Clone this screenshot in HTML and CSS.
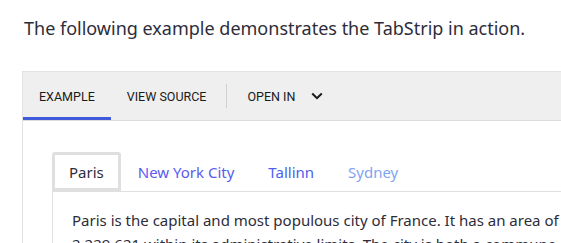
FILE: index.html
```html
<!DOCTYPE html>
<html lang="en">
<head>
  <meta charset="UTF-8" />
  <meta name="viewport" content="width=device-width, initial-scale=1.0" />
  <title>TabStrip</title>
  <link rel="stylesheet" href="styles.css">
</head>
<body>
  <p class="intro">The following example demonstrates the TabStrip in action.</p>

  <div class="demo">
    <div class="toolbar">
      <button class="tool active">EXAMPLE</button>
      <button class="tool">VIEW SOURCE</button>
      <span class="divider"></span>
      <button class="tool open-in">OPEN IN
        <svg width="12" height="8" viewBox="0 0 12 8"><path d="M1.2 1.5 L6 6.2 L10.8 1.5" fill="none" stroke="#1a1a1a" stroke-width="2"/></svg>
      </button>
    </div>

    <div class="stage">
      <ul class="tabs">
        <li class="tab selected">Paris</li>
        <li class="tab nyc">New York City</li>
        <li class="tab tallinn">Tallinn</li>
        <li class="tab sydney">Sydney</li>
      </ul>
      <div class="pane">
        <p>Paris is the capital and most populous city of France. It has an area of 105 square kilometres (41 square miles) and a population in 2013 of 2,229,621 within its administrative limits. The city is both a commune and department, and forms the centre and headquarters of the Île-de-France, or Paris Region.</p>
      </div>
    </div>
  </div>
</body>
</html>
```

FILE: styles.css
```css
html, body {
  overflow: hidden;
}
body {
  margin: 0;
  padding: 0 0 0 22px;
  font-family: "Noto Sans", sans-serif;
  color: #2d2d3a;
  background: #fff;
}
.intro {
  margin: 0;
  padding: 16px 0 0 2px;
  height: 55px;
  font-size: 18px;
  line-height: 24px;
}
.demo {
  width: 1100px;
  border: 1px solid #e2e2e2;
  border-right: none;
}
.toolbar {
  display: flex;
  align-items: center;
  height: 48px;
  background: #efefef;
  border-bottom: 1px solid #dcdcdc;
}
.tool {
  height: 48px;
  padding: 0 16px;
  border: none;
  background: none;
  font-family: Roboto, sans-serif;
  font-size: 12.5px;
  color: #1a1a1a;
  cursor: pointer;
  display: flex;
  align-items: center;
  gap: 16px;
}
.tool.active {
  box-shadow: inset 0 -3px 0 #3f5bd9;
}
.divider {
  width: 1px;
  height: 24px;
  background: #d0d0d0;
  margin: 0 4px;
}
.stage {
  padding: 31px 0 0 29px;
}
.tabs {
  list-style: none;
  margin: 0;
  padding: 0;
  display: flex;
  border-bottom: 1px solid #e0e0e0;
}
.tab {
  padding: 6px 14px 5px;
  font-size: 15px;
  line-height: 22px;
  border: 3px solid transparent;
}
.tab.selected {
  border-color: #dfdfdf;
  border-radius: 3px 3px 0 0;
  color: #2d2d3a;
}
.nyc { color: #5a5af2; }
.tallinn { color: #4b5ff0; }
.sydney { color: #7ea4f2; }
.pane {
  border-left: 1px solid #e0e0e0;
  padding: 16px 19px;
}
.pane p {
  margin: 0;
  font-size: 15px;
  line-height: 24px;
  width: 980px;
}
```
